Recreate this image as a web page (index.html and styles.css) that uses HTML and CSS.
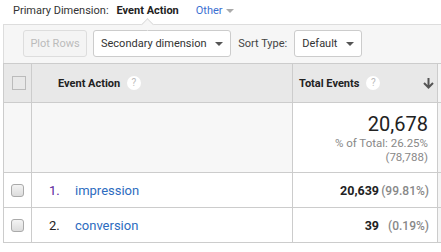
FILE: index.html
```html
<!DOCTYPE html>
<html lang="en">
<head>
    <meta charset="utf-8">
    <title>Events report</title>
    <link rel="stylesheet" href="styles.css">
</head>
<body>
    <div class="dimension-bar">
        <span class="dimension-label">Primary Dimension:</span>
        <span class="dimension-active">Event Action</span>
        <span class="dimension-other">Other <span class="caret-small"></span></span>
    </div>
    <div class="toolbar">
        <button class="btn btn-disabled">Plot Rows</button>
        <button class="btn btn-select">Secondary dimension <span class="caret"></span></button>
        <span class="sort-label">Sort Type:</span>
        <button class="btn btn-select">Default <span class="caret"></span></button>
    </div>
    <table class="report">
        <colgroup>
            <col class="col-check">
            <col class="col-dim">
            <col class="col-metric">
            <col class="col-rest">
        </colgroup>
        <thead>
            <tr>
                <th class="cell-check"><span class="box"></span></th>
                <th class="cell-dim"><span class="head-text">Event Action</span> <span class="help">?</span></th>
                <th class="cell-metric">
                    <div class="metric-head">
                        <span class="head-text">Total Events</span> <span class="help">?</span>
                        <svg class="sort-arrow" width="11" height="11" viewBox="0 0 11 11"><path d="M5.5 0v9M1 5l4.5 4.5L10 5" fill="none" stroke="#555" stroke-width="2"/></svg>
                    </div>
                </th>
                <th class="cell-rest"></th>
            </tr>
        </thead>
        <tbody>
            <tr class="summary">
                <td></td>
                <td></td>
                <td class="summary-metric">
                    <div class="summary-big">20,678</div>
                    <div class="summary-small">% of Total: 26.25%</div>
                    <div class="summary-small">(78,788)</div>
                </td>
                <td class="cell-rest"></td>
            </tr>
            <tr class="row">
                <td class="cell-check"><span class="row-box"></span></td>
                <td><span class="idx idx-visited">1.</span><a class="dim-link" href="#">impression</a></td>
                <td class="value"><b>20,639</b><span class="pct">(99.81%)</span></td>
                <td class="cell-rest"></td>
            </tr>
            <tr class="row">
                <td class="cell-check"><span class="row-box"></span></td>
                <td><span class="idx">2.</span><a class="dim-link" href="#">conversion</a></td>
                <td class="value"><b>39</b><span class="pct">(0.19%)</span></td>
                <td class="cell-rest"></td>
            </tr>
        </tbody>
    </table>
</body>
</html>
```

FILE: styles.css
```css
body {
    margin: 0;
    font-family: Roboto, "Liberation Sans", sans-serif;
    font-size: 13px;
    color: #222;
    background: #fff;
}

.dimension-bar {
    height: 24px;
    display: flex;
    align-items: center;
    padding-left: 13px;
    padding-bottom: 4px;
    box-sizing: border-box;
    font-size: 11px;
}
.dimension-label {
    color: #333;
}
.dimension-active {
    font-weight: bold;
    margin-left: 8px;
}
.dimension-other {
    color: #3b6fd1;
    margin-left: 17px;
}
.caret-small {
    display: inline-block;
    border-left: 4px solid transparent;
    border-right: 4px solid transparent;
    border-top: 4px solid #aaa;
    vertical-align: middle;
    margin-left: 1px;
}

.toolbar {
    position: relative;
    margin-left: 3px;
    height: 39px;
    box-sizing: border-box;
    border-top: 1px solid #ddd;
    border-left: 1px solid #ddd;
    background: #f6f6f6;
    display: flex;
    align-items: center;
    padding-left: 19px;
    padding-bottom: 1px;
    font-size: 11px;
}
/* notch under the active dimension */
.toolbar::before {
    content: "";
    position: absolute;
    left: 139px;
    top: -5px;
    width: 8px;
    height: 8px;
    background: #f6f6f6;
    border-top: 1px solid #ddd;
    border-left: 1px solid #ddd;
    transform: rotate(45deg);
}

.btn {
    height: 27px;
    font-family: inherit;
    font-size: 11px;
    color: #333;
    background: #fff;
    border: 1px solid #ccc;
    border-radius: 3px;
    padding: 0 11px;
    margin-right: 6px;
}
.btn-disabled {
    width: 64px;
    padding: 0;
    color: #bbb;
    background: #f4f4f4;
    border-color: #ddd;
}
.btn-select {
    padding: 0 7px 0 7px;
    margin-right: 7px;
}
.caret {
    display: inline-block;
    border-left: 4px solid transparent;
    border-right: 4px solid transparent;
    border-top: 4px solid #555;
    vertical-align: middle;
    margin-left: 6px;
}
.sort-label {
    color: #444;
    margin-right: 7px;
}

.report {
    margin-left: 3px;
    width: 438px;
    border-collapse: collapse;
    table-layout: fixed;
}
.col-check { width: 28px; }
.col-dim { width: 261px; }
.col-metric { width: 145px; }
.col-rest { width: 4px; }

.report th,
.report td {
    border: 1px solid #ccc;
    padding: 0;
}
.report th {
    height: 38px;
    background: #e8e8e8;
    text-align: left;
    font-weight: bold;
    font-size: 11px;
}
.report .cell-rest {
    border-right: none;
    background: #f5f5f5;
}
.box {
    display: block;
    width: 12px;
    height: 12px;
    margin-left: 8px;
    border: 1px solid #bbb;
    background: #e8e8e8;
}
.cell-dim {
    padding-left: 26px !important;
}
.head-text {
    vertical-align: middle;
}
.help {
    display: inline-block;
    width: 14px;
    height: 14px;
    line-height: 14px;
    border-radius: 50%;
    background: #fff;
    color: #bbb;
    font-size: 10px;
    font-weight: normal;
    text-align: center;
    vertical-align: middle;
    margin-left: 4px;
}
.metric-head {
    display: flex;
    align-items: center;
    padding-left: 6px;
}
.metric-head .help {
    margin-left: 7px;
}
.sort-arrow {
    margin-left: auto;
    margin-right: 3px;
}

.summary td {
    height: 60px;
    background: #f7f7f7;
}
.summary .summary-metric {
    background: #fff;
    text-align: right;
    padding-right: 9px;
    vertical-align: top;
    padding-top: 9px;
}
.summary-big {
    font-size: 20px;
    line-height: 24px;
    color: #222;
}
.summary-small {
    font-size: 11.5px;
    line-height: 14px;
    color: #888;
}

.row td {
    height: 34px;
    background: #fff;
}
.row-box {
    display: block;
    width: 11px;
    height: 11px;
    margin-left: 7px;
    border: 1px solid #aaa;
    border-radius: 3px;
    background: linear-gradient(#f4f4f4, #dcdcdc);
}
.idx {
    display: inline-block;
    width: 26px;
    padding-left: 17px;
    color: #222;
}
.idx-visited {
    color: #5a1e9c;
}
.dim-link {
    color: #2d6cc0;
    text-decoration: none;
}
.value {
    text-align: right;
    padding-right: 8px !important;
}
.value b {
    font-size: 12.5px;
    color: #222;
}
.pct {
    display: inline-block;
    width: 50px;
    text-align: right;
    font-size: 12px;
    color: #888;
    font-weight: 500;
}
```
